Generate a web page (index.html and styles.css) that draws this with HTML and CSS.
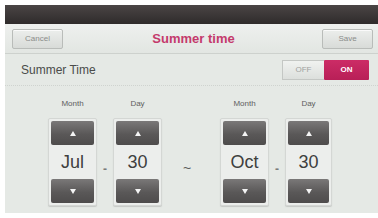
FILE: index.html
```html
<!DOCTYPE html>
<html>
<head>
<meta charset="utf-8">
<link rel="stylesheet" href="styles.css">
</head>
<body>
<div class="screen">
  <div class="topbar"></div>
  <div class="header">
    <button class="btn">Cancel</button>
    <div class="title">Summer time</div>
    <button class="btn">Save</button>
  </div>
  <div class="row">
    <span class="row-label">Summer Time</span>
    <div class="toggle">
      <span class="off">OFF</span>
      <span class="on">ON</span>
    </div>
  </div>
  <div class="pickers">
    <div class="col">
      <div class="lbl">Month</div>
      <div class="spin">
        <div class="arrow up"></div>
        <div class="val">Jul</div>
        <div class="arrow down"></div>
      </div>
    </div>
    <div class="dash">-</div>
    <div class="col">
      <div class="lbl">Day</div>
      <div class="spin">
        <div class="arrow up"></div>
        <div class="val">30</div>
        <div class="arrow down"></div>
      </div>
    </div>
    <div class="tilde">~</div>
    <div class="col">
      <div class="lbl">Month</div>
      <div class="spin">
        <div class="arrow up"></div>
        <div class="val">Oct</div>
        <div class="arrow down"></div>
      </div>
    </div>
    <div class="dash">-</div>
    <div class="col">
      <div class="lbl">Day</div>
      <div class="spin">
        <div class="arrow up"></div>
        <div class="val">30</div>
        <div class="arrow down"></div>
      </div>
    </div>
  </div>
</div>
</body>
</html>
```
FILE: styles.css
```css
html, body {
  margin: 0;
  padding: 0;
  background: #ffffff;
  width: 378px;
  height: 218px;
  overflow: hidden;
  font-family: "Liberation Sans", Arial, sans-serif;
}
.screen {
  margin: 5px 0 0 5px;
  width: 373px;
  height: 208px;
  background: #e5e9e5;
  display: flex;
  flex-direction: column;
}
.topbar {
  height: 19px;
  background: linear-gradient(#4a4545, #2f2b2b);
}
.header {
  height: 29px;
  display: flex;
  align-items: center;
  justify-content: space-between;
  padding: 0 5px 0 7px;
  background: linear-gradient(#eef0ee, #e2e6e2);
  border-bottom: 1px solid #cdd1cd;
}
.btn {
  width: 51px;
  height: 20px;
  padding: 0;
  font-family: inherit;
  font-size: 8px;
  color: #8a8c8a;
  background: linear-gradient(#eceeec, #d8dbd8);
  border: 1px solid #b9bcb9;
  border-radius: 2px;
  box-shadow: inset 0 1px 0 #fafafa;
}
.title {
  font-size: 13px;
  font-weight: bold;
  color: #c43a6c;
  margin-left: 2px;
}
.row {
  height: 31px;
  display: flex;
  align-items: center;
  justify-content: space-between;
  padding: 0 9px 0 16px;
  border-bottom: 1px dotted #cfd3cf;
}
.row-label {
  font-size: 12px;
  color: #4a4c4a;
}
.toggle {
  display: flex;
  height: 20px;
}
.toggle span {
  display: flex;
  align-items: center;
  justify-content: center;
  font-size: 8px;
}
.off {
  width: 42px;
  color: #a0a2a0;
  background: linear-gradient(#f0f2f0, #dcdfdc);
  border: 1px solid #c4c7c4;
  border-right: none;
  box-sizing: border-box;
}
.on {
  width: 45px;
  color: #ffffff;
  font-weight: bold;
  background: linear-gradient(#cc2c66, #b81f57);
  border-radius: 1px;
}
.pickers {
  flex: 1;
  display: flex;
  align-items: flex-start;
  padding: 12px 0 0 43px;
}
.col {
  display: flex;
  flex-direction: column;
  align-items: center;
}
.lbl {
  font-size: 8px;
  color: #5e605e;
  height: 12px;
  line-height: 12px;
  margin-bottom: 8px;
}
.spin {
  width: 49px;
  height: 88px;
  box-sizing: border-box;
  padding: 2px;
  background: #eceeec;
  border: 1px solid #d4d7d4;
  border-radius: 2px;
  box-shadow: 0 1px 1px #c6c9c6;
  display: flex;
  flex-direction: column;
  justify-content: space-between;
}
.arrow {
  height: 24px;
  border-radius: 2px;
  background: linear-gradient(#7a7878, #5a5858 55%, #4e4c4c);
  position: relative;
}
.arrow::after {
  content: "";
  position: absolute;
  left: 50%;
  top: 50%;
  margin-left: -3px;
  border-left: 3px solid transparent;
  border-right: 3px solid transparent;
}
.up::after {
  margin-top: -2px;
  border-bottom: 5px solid #f4f4f4;
}
.down::after {
  margin-top: -2px;
  border-top: 5px solid #f4f4f4;
}
.val {
  text-align: center;
  font-size: 18px;
  color: #3e403e;
}
.dash {
  width: 16px;
  text-align: center;
  font-size: 12px;
  font-weight: bold;
  color: #7a7c7a;
  margin-top: 64px;
}
.tilde {
  width: 58px;
  text-align: center;
  font-size: 14px;
  color: #5a5c5a;
  margin-top: 62px;
  padding-right: 8px;
  box-sizing: border-box;
}
.col:nth-child(2) .spin, .col:nth-child(4) .spin { width: 50px; }
.col:nth-child(7) .spin { width: 47px; }
```
